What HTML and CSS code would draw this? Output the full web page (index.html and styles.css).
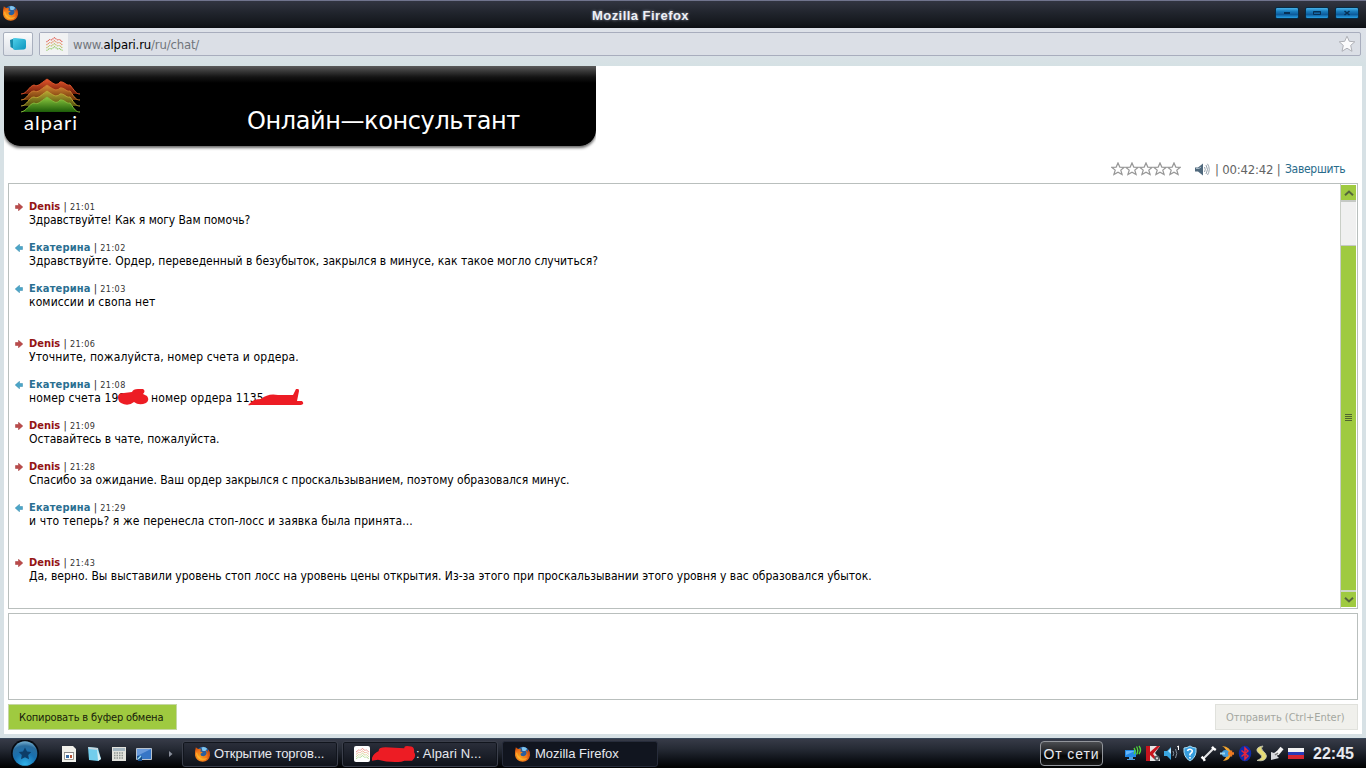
FILE: index.html
```html
<!DOCTYPE html>
<html lang="ru">
<head>
<meta charset="utf-8">
<title>Mozilla Firefox</title>
<link rel="stylesheet" href="styles.css">
</head>
<body>
<svg class="defs" width="0" height="0" aria-hidden="true">
  <defs>
    <linearGradient id="hill1" x1="0" y1="0" x2="0" y2="1"><stop offset="0" stop-color="#e8562c"/><stop offset="1" stop-color="#6b1c08"/></linearGradient>
    <linearGradient id="hill2" x1="0" y1="0" x2="0" y2="1"><stop offset="0" stop-color="#d88a36"/><stop offset="1" stop-color="#6e3408"/></linearGradient>
    <linearGradient id="hill3" x1="0" y1="0" x2="0" y2="1"><stop offset="0" stop-color="#b8a834"/><stop offset="1" stop-color="#54500c"/></linearGradient>
    <linearGradient id="hill4" x1="0" y1="0" x2="0" y2="1"><stop offset="0" stop-color="#8cc840"/><stop offset="1" stop-color="#1c5c08"/></linearGradient>
    <radialGradient id="fox" cx=".35" cy=".65" r=".75"><stop offset="0" stop-color="#f9a11d"/><stop offset=".55" stop-color="#f07418"/><stop offset="1" stop-color="#b83a08"/></radialGradient>
    <radialGradient id="orb" cx=".5" cy=".95" r=".95"><stop offset="0" stop-color="#2fb4ec"/><stop offset=".5" stop-color="#1870b0"/><stop offset=".8" stop-color="#2a6c9c"/><stop offset="1" stop-color="#79b4d4"/></radialGradient>
    <linearGradient id="cyan" x1="0" y1="0" x2="1" y2="1"><stop offset="0" stop-color="#4fd0ea"/><stop offset="1" stop-color="#0b94bd"/></linearGradient>
  </defs>
  <symbol id="firefox" viewBox="0 0 16 16">
    <circle cx="8.5" cy="7.4" r="6.6" fill="#2b5f9e"/>
    <path d="M7 1.6Q10 0 12.6 2.7L11 5 8 5z" fill="#7fc4ee"/>
    <path d="M1.3 1.2 3.6 3.1Q5 2.7 6.6 3.2L5.7 5.4 8.3 6.3 6 7.7Q6 10.3 9 10.2 12.2 10 12 6.3L11 3.9Q13 4.6 13.3 6.4L13.6 3.2Q16.2 6 15.6 9.2 14.4 15.6 8.2 15.8 1.8 15.6.5 9.5.1 5.5 1.3 1.2Z" fill="url(#fox)"/>
    <path d="M1.4 7Q1.8 12 6 14 10.5 15.3 13.5 11.5 9.8 13.6 6 11.7 2.8 9.6 2.6 6.2Z" fill="#ffc43a" opacity=".6"/>
  </symbol>
  <symbol id="waves" viewBox="0 0 16 14">
    <g fill="none" stroke-width="1.1" stroke-dasharray="1.2 .6">
      <path d="M0 5 3 2.5 5 3 8 .7 11 3 13 2.5 16 5" stroke="#e0584c"/>
      <path d="M0 8 3 5.5 5 6 8 3.7 11 6 13 5.5 16 8" stroke="#e48a5c"/>
      <path d="M0 11 3 8.5 5 9 8 6.7 11 9 13 8.5 16 11" stroke="#b9b95a"/>
      <path d="M0 13.5 3 11.5 5 12 8 9.7 11 12 13 11.5 16 13.5" stroke="#8cc75c"/>
    </g>
  </symbol>
  <symbol id="star" viewBox="0 0 14 14"><path d="M7 .9 8.8 5.1 13.2 5.3 9.8 8.1 11.1 12.6 7 10.3 2.9 12.6 4.2 8.1.8 5.3 5.2 5.1Z" fill="#fff" stroke="#979797" stroke-width="1.2"/></symbol>
  <symbol id="arrow-in" viewBox="0 0 8 8"><path d="M.5 2.5H3.5V.3L7.8 4 3.5 7.8V5.5H.5Z" fill="#bb4a4a" stroke="#a03636" stroke-width=".5"/></symbol>
  <symbol id="arrow-out" viewBox="0 0 8 8"><path d="M7.5 2.5H4.5V.3L.2 4 4.5 7.8V5.5H7.5Z" fill="#4ba5c8" stroke="#358bad" stroke-width=".5"/></symbol>
</svg>

<header class="titlebar">
  <svg class="titlebar-icon" width="17" height="16"><use href="#firefox"/></svg>
  <h1 class="titlebar-text">Mozilla Firefox</h1>
  <div class="window-buttons">
    <span class="window-button"><svg width="22" height="10"><path d="M8 5H14" stroke="#063055" stroke-width="2"/></svg></span>
    <span class="window-button"><svg width="22" height="10"><path d="M7.5 3.5H14.5V6.5H7.5ZM7.5 4H14.5" fill="none" stroke="#063055"/></svg></span>
    <span class="window-button"><svg width="22" height="10"><path d="M8.5 3 13.5 7M13.5 3 8.5 7" stroke="#063055" stroke-width="1.6"/></svg></span>
  </div>
</header>

<nav class="navbar">
  <span class="tab-button"><svg width="18" height="14" viewBox="0 0 18 14"><path d="M1 3 5 1.5V12L1.5 10Z" fill="#168bac"/><path d="M4 2Q4 1 6 1L15 2Q17 2 17 4V10Q17 12 15 12.5L6 13Q4 13 4 11Z" fill="url(#cyan)"/></svg></span>
  <div class="address">
    <span class="site-icon"><svg width="17" height="14"><use href="#waves"/></svg></span>
    <span class="url">www.<b>alpari.ru</b>/ru/chat/</span>
    <svg class="bookmark" width="18" height="18" viewBox="0 0 18 18"><path d="M9 1.2 11.3 6.3 16.8 6.8 12.7 10.4 14 16.3 9 13.2 4 16.3 5.3 10.4 1.2 6.8 6.7 6.3Z" fill="#fbfbfc" stroke="#aeb0b6"/></svg>
  </div>
</nav>

<main class="page">
  <div class="banner">
    <div class="logo">
      <svg width="60" height="35" viewBox="0 0 60 35">
        <path d="M0 16C6 16 8 8 13 7 17 9 19 6 26 1 32 5 35 9 39 4 43 3 45 8 49 7 54 13 55 16 59 16Z" fill="url(#hill1)"/>
        <path d="M0 22C6 22 8 13 13 13 17 15 19 12 26 7 32 11 35 14 39 10 43 9 45 14 49 13 54 20 55 22 59 22Z" fill="url(#hill2)"/>
        <path d="M0 28C6 28 8 19 13 19 17 21 19 18 26 13 32 17 35 20 39 16 43 15 45 20 49 19 54 26 55 28 59 28Z" fill="url(#hill3)"/>
        <path d="M0 34C6 33 8 26 13 25 17 27 19 24 26 19 32 23 35 27 39 22 43 21 45 26 49 25 54 32 55 34 59 34Z" fill="url(#hill4)"/>
        <path d="M0 16C6 16 8 8 13 7 17 9 19 6 26 1 32 5 35 9 39 4 43 3 45 8 49 7 54 13 55 16 59 16" fill="none" stroke="#d9532c"/>
        <path d="M0 22C6 22 8 13 13 13 17 15 19 12 26 7 32 11 35 14 39 10 43 9 45 14 49 13 54 20 55 22 59 22" fill="none" stroke="#cc7c30"/>
        <path d="M0 28C6 28 8 19 13 19 17 21 19 18 26 13 32 17 35 20 39 16 43 15 45 20 49 19 54 26 55 28 59 28" fill="none" stroke="#bba735"/>
        <path d="M0 34C6 33 8 26 13 25 17 27 19 24 26 19 32 23 35 27 39 22 43 21 45 26 49 25 54 32 55 34 59 34" fill="none" stroke="#84b83a"/>
      </svg>
      <span class="logo-text">alpari</span>
    </div>
    <h2 class="banner-title">Онлайн—консультант</h2>
  </div>

  <div class="toolbar">
    <span class="rating"><svg width="14" height="14"><use href="#star"/></svg><svg width="14" height="14"><use href="#star"/></svg><svg width="14" height="14"><use href="#star"/></svg><svg width="14" height="14"><use href="#star"/></svg><svg width="14" height="14"><use href="#star"/></svg></span>
    <svg class="sound" width="15" height="13" viewBox="0 0 15 13"><path d="M0 4.5H3L8 .5V12.5L3 8.5H0Z" fill="#50697d"/><path d="M1 5.5H4L6 4" stroke="#a5b8c5" fill="none"/><path d="M9.5 4Q11 6.5 9.5 9M11 2Q14 6.5 11 11M12.5.8Q16 6.5 12.5 12" fill="none" stroke="#8a97a3" stroke-width=".9"/></svg>
    <span class="timer">| 00:42:42 |</span>
    <a class="finish">Завершить</a>
  </div>

  <section class="chat">
    <div class="messages">
      <article class="message in"><svg width="8" height="8"><use href="#arrow-in"/></svg><div><p class="meta"><b>Denis</b> | <time>21:01</time></p><p class="text tight">Здравствуйте! Как я могу Вам помочь?</p></div></article>
      <article class="message out"><svg width="8" height="8"><use href="#arrow-out"/></svg><div><p class="meta"><b>Екатерина</b> | <time>21:02</time></p><p class="text even">Здравствуйте. Ордер, переведенный в безубыток, закрылся в минусе, как такое могло случиться?</p></div></article>
      <article class="message out spaced"><svg width="8" height="8"><use href="#arrow-out"/></svg><div><p class="meta"><b>Екатерина</b> | <time>21:03</time></p><p class="text loose">комиссии и свопа нет</p></div></article>
      <article class="message in"><svg width="8" height="8"><use href="#arrow-in"/></svg><div><p class="meta"><b>Denis</b> | <time>21:06</time></p><p class="text loose">Уточните, пожалуйста, номер счета и ордера.</p></div></article>
      <article class="message out"><svg width="8" height="8"><use href="#arrow-out"/></svg><div><p class="meta"><b>Екатерина</b> | <time>21:08</time></p><p class="text loose numbers"><span class="account">номер счета 199</span><span class="order">номер ордера 1135</span>
        <svg class="scribble" width="280" height="22" viewBox="0 0 280 22"><g fill="#ed1c24"><path d="M89 8Q89 4 95 4L103 3Q104 0 109 0L114 0Q117 2 114 5L118 7Q121 11 117 14 110 17 105 13 99 18 92 14Q89 12 89 8Z"/><path d="M220 15Q224 10 232 10 239 4 249 6L264 6 267 0Q270-1 270 2L268 12 273 12Q276 15 272 16L222 16Q218 17 220 15Z"/></g></svg></p></div></article>
      <article class="message in"><svg width="8" height="8"><use href="#arrow-in"/></svg><div><p class="meta"><b>Denis</b> | <time>21:09</time></p><p class="text">Оставайтесь в чате, пожалуйста.</p></div></article>
      <article class="message in"><svg width="8" height="8"><use href="#arrow-in"/></svg><div><p class="meta"><b>Denis</b> | <time>21:28</time></p><p class="text">Спасибо за ожидание. Ваш ордер закрылся с проскальзыванием, поэтому образовался минус.</p></div></article>
      <article class="message out spaced"><svg width="8" height="8"><use href="#arrow-out"/></svg><div><p class="meta"><b>Екатерина</b> | <time>21:29</time></p><p class="text loose">и что теперь? я же перенесла стоп-лосс и заявка была принята...</p></div></article>
      <article class="message in"><svg width="8" height="8"><use href="#arrow-in"/></svg><div><p class="meta"><b>Denis</b> | <time>21:43</time></p><p class="text even">Да, верно. Вы выставили уровень стоп лосс на уровень цены открытия. Из-за этого при проскальзывании этого уровня у вас образовался убыток.</p></div></article>
    </div>
    <div class="scrollbar">
      <span class="scroll-end"><svg width="10" height="6"><path d="M1 5.2 5 1.5 9 5.2" fill="none" stroke="#55663c" stroke-width="2"/></svg></span>
      <span class="scroll-track"></span>
      <span class="scroll-thumb"><svg width="7" height="8"><path d="M0 .5H7M0 2.5H7M0 4.5H7M0 6.5H7" stroke="#50642f"/></svg></span>
      <span class="scroll-end"><svg width="10" height="6"><path d="M1 .8 5 4.5 9 .8" fill="none" stroke="#55663c" stroke-width="2"/></svg></span>
    </div>
  </section>

  <div class="reply"></div>
  <div class="actions">
    <span class="button copy"><span>Копировать в буфер обмена</span></span>
    <span class="button send"><span>Отправить (Ctrl+Enter)</span></span>
  </div>
</main>

<footer class="taskbar">
  <svg class="start" width="30" height="28" viewBox="0 0 30 28"><circle cx="15" cy="13.5" r="14" fill="#070a10"/><circle cx="15" cy="13.5" r="12.3" fill="url(#orb)"/><path d="M15 7.5 17 11.5 21.3 12 18.2 15 19 19.3 15 17.3 11 19.3 11.8 15 8.7 12 13 11.5Z" fill="#0d3d68"/></svg>
  <div class="quick">
    <svg width="16" height="16" viewBox="0 0 16 16"><path d="M1 0H12L15 3V16H1Z" fill="#f0f0ea"/><path d="M3.5 6.5H12.5V13.5H3.5Z" fill="#fff" stroke="#9b9b92"/><path d="M3 6.5H13" stroke="#888"/><path d="M5 9H8V12H5Z" fill="#386da5"/><path d="M9 9H11V12H9Z" fill="#b65435"/></svg>
    <svg width="16" height="16" viewBox="0 0 16 16"><path d="M2 1 12 2 15 13 12 15 3 14Z" fill="#72cdec"/><path d="M11 2 15 13 12 15Z" fill="#d9edf2"/><path d="M2 1 12 2V4L3 3Z" fill="#c5d7df"/></svg>
    <svg width="16" height="16" viewBox="0 0 16 16"><path d="M1 1H15V15H1Z" fill="#e2e2dc"/><path d="M2 2H14V5H2Z" fill="#a5b6c0"/><path d="M3 7H13M3 9.5H13M3 12H13" stroke="#8e9490" stroke-width="1.3" stroke-dasharray="1.5 1"/></svg>
    <svg width="16" height="16" viewBox="0 0 16 16"><path d="M.5 2.5H15.5V13.5H.5Z" fill="#3776c6" stroke="#b8c2cd"/><path d="M1 3H15L1 10Z" fill="#6a9bdc"/><path d="M1 10H6V15H2Z" fill="#18508e"/><path d="M2 13 5 10" stroke="#9fe0f8" stroke-width="1.5"/></svg>
  </div>
  <svg class="more" width="4" height="6"><path d="M0 0 3.5 3 0 6Z" fill="#8a8f9b"/></svg>
  <div class="tasks">
    <span class="task"><svg width="17" height="16"><use href="#firefox"/></svg><span class="task-name t1">Открытие торгов...</span></span>
    <span class="task second"><span class="task-site"><svg width="13" height="11"><use href="#waves"/></svg></span><svg class="blot" width="45" height="18" viewBox="0 0 46 18"><path d="M1 13Q3 8 8 6 7 2 15 2L34 3Q34 0 39 1 45 1 44 7 47 12 42 16L34 16 31 17Q18 18 7 15L1 16Z" fill="#ed1c24"/></svg><span class="task-name t2">: Alpari N...</span></span>
    <span class="task active"><svg width="17" height="16"><use href="#firefox"/></svg><span class="task-name t3">Mozilla Firefox</span></span>
  </div>
  <span class="power">От сети</span>
  <div class="tray">
    <svg width="17" height="17" viewBox="0 0 17 17"><path d="M0 5H11V12H0Z" fill="#238be8"/><path d="M1 6H10L1 10Z" fill="#68b7fa"/><path d="M4 12H8V14H10V15H2V14H4Z" fill="#4f9ddb"/><path d="M9 3Q11 6 9 9M11.5 1.5Q14 5.5 11.5 9.5M14 1Q17 5 14 9" fill="none" stroke="#50d33a" stroke-width="1.4"/></svg>
    <svg width="16" height="17" viewBox="0 0 16 17"><path d="M1 1H15L10 8 15 14V16H1Z" fill="#e5e5e5"/><path d="M1 1H5V7L12 1H15L8 9 12 14H9L5 10V16H1Z" fill="#c7141d"/><circle cx="12" cy="13.3" r="2.7" fill="#555b60"/><circle cx="12" cy="13.3" r="1.1" fill="#ddd"/></svg>
    <svg width="17" height="17" viewBox="0 0 17 17"><path d="M1 6H4L8 2V15L4 11H1Z" fill="#3aa5df"/><path d="M5 6 8 3V9Z" fill="#b8e7ff"/><path d="M10 6Q11.5 8.5 10 11M12.5 4Q15 8.5 12.5 13" fill="none" stroke="#82909d"/><path d="M14 2 15.5 1V5" fill="none" stroke="#fff"/></svg>
    <svg width="14" height="17" viewBox="0 0 14 17"><path d="M7 1Q10 3 13 3 14 12 7 16 0 12 1 3 4 3 7 1Z" fill="#359dde" stroke="#a9ddf5"/><path d="M4.5 6Q5 4 7.2 4.2 10.3 5 8.8 7.4L7 9V10.5M7 12V13.5" fill="none" stroke="#fff" stroke-width="1.6"/></svg>
    <svg width="17" height="17" viewBox="0 0 17 17"><path d="M3.5 13.5 13.5 3.5" stroke="#e2e3e5" stroke-width="2.2"/><path d="M1.5 11.8 3.5 13.5 4.8 15.8M12 1.8 13.5 3.5 15.8 5" fill="none" stroke="#fff" stroke-width="2.5"/></svg>
    <svg width="16" height="17" viewBox="0 0 16 17"><path d="M3 1Q12 2 12 8.5 12 15 4 16 8 12 8 8.5 8 4 3 1Z" fill="#f4a52e"/><circle cx="6.5" cy="8.5" r="3.6" fill="#439cda"/><path d="M9 8.5H15M12 5.5V11.5" stroke="#ed7a21" stroke-width="2.4"/><path d="M1 8.5H6" stroke="#9dd5ed" stroke-width="2"/></svg>
    <svg width="14" height="17" viewBox="0 0 14 17"><ellipse cx="7" cy="8.5" rx="6.2" ry="7.8" fill="#102cab"/><path d="M3.5 5.5 10 11 7 14V3L10 6 3.5 11.5" fill="none" stroke="#ea263b" stroke-width="1.5"/></svg>
    <svg width="13" height="17" viewBox="0 0 13 17"><path d="M8 1Q1 2 2 6 3 8 6 10 8 12 5 14L2 15.5Q11 17 11.5 11 11 8 8 6 5 3 8 1Z" fill="#e6dc75" stroke="#c5c8b5" stroke-width=".8"/></svg>
    <svg width="15" height="17" viewBox="0 0 15 17"><path d="M1 7 4 8 7 6 9 8 7 11 9 13 1 15Z" fill="#d6d8dc"/><path d="M7 9 12 3" stroke="#f2f2f2" stroke-width="4"/><path d="M5 10 8 8" stroke="#777" stroke-width="1.5"/></svg>
    <span class="flag"></span>
  </div>
  <span class="clock">22:45</span>
</footer>
</body>
</html>
```

FILE: styles.css
```css
* { box-sizing: border-box; }
body, h1, h2, p { margin: 0; }
body {
  width: 1366px; height: 768px; overflow: hidden;
  display: flex; flex-direction: column;
  background: #d7e1e5;
  font-family: "DejaVu Sans Condensed", "DejaVu Sans", sans-serif;
  font-stretch: condensed;
  white-space: nowrap;
}
svg { display: block; flex: none; }
.defs { position: absolute; }

.titlebar {
  height: 28px; flex: none; display: flex; padding: 0 7px 0 2px;
  border-top: 1px solid #70748d;
  background: linear-gradient(#323541, #20242c 45%, #14171c 85%, #0c0e13);
}
.titlebar-icon { margin-top: 4px; }
.titlebar-text {
  flex: 1; margin: 6px 0 0 573px; color: #eef0f6;
  font: 700 13px/18px "Liberation Sans", sans-serif; letter-spacing: .45px;
  text-shadow: 0 0 3px #9296a8;
}
.window-buttons { display: flex; gap: 6px; padding-top: 6px; }
.window-button {
  width: 24px; height: 12px; border: 1px solid #082b43; border-radius: 2px;
  background: linear-gradient(#46b0e8, #197bbb 35%, #0d5b9b 65%, #27a0e5);
}

.navbar {
  height: 38px; flex: none; display: flex; gap: 6px; padding: 4px 5px 10px 3px;
  background: linear-gradient(#dde1e8, #dbe1e7 60%, #d5e1e4);
}
.tab-button {
  width: 30px; height: 24px; display: grid; place-items: center;
  border: 1px solid #a9b0be; border-radius: 2px; background: linear-gradient(#fafbfc, #dce0e7);
}
.address {
  flex: 1; height: 24px; display: flex; align-items: center; padding-right: 4px;
  border: 1px solid #a8adbd; border-radius: 2px; background: #dbdfe6;
}
.site-icon { width: 28px; height: 22px; display: grid; place-items: center; background: #f1f2f3; }
.url { flex: 1; padding-left: 5px; font-size: 13px; color: #71757b; letter-spacing: -.17px; }
.url b { font-weight: 400; color: #000; }

.page {
  width: 1358px; height: 668px; flex: none; margin-left: 4px; background: #fff;
  display: flex; flex-direction: column;
}
.banner {
  width: 592px; height: 80px; flex: none; display: flex;
  border-radius: 0 0 16px 16px;
  background: linear-gradient(#5b5b5b, #393939 5px, #141414 11px, #000 17px);
  box-shadow: 0 2px 3px rgba(0, 0, 0, .6);
  clip-path: inset(0 0 -8px 0);
}
.logo { width: 60px; margin: 12px 0 0 17px; color: #fff; }
.logo-text { display: block; margin-left: 3px; font: 400 20px/19px Lato, sans-serif; letter-spacing: 1.05px; }
.banner-title { margin: 39px 0 0 166px; color: #fff; font: 400 24px/32px "DejaVu Sans", sans-serif; font-stretch: normal; letter-spacing: -.4px; }

.toolbar { height: 37px; flex: none; display: flex; justify-content: flex-end; align-items: flex-end; padding: 0 18px 5px 0; color: #646464; font-size: 13px; line-height: 17px; }
.rating { display: flex; margin: 0 14px 2px 0; }
.sound { margin: 0 5px 2px 0; }
.timer { width: 70px; letter-spacing: -.2px; }
.finish { width: 59px; color: #286b8b; font-size: 12px; letter-spacing: -.3px; }

.chat { height: 426px; flex: none; margin: 0 4px; border: 1px solid #b9bfbd; display: flex; }
.messages { flex: 1; padding: 16px 0 0 6px; }
.message { height: 41px; display: flex; gap: 6px; }
.message > svg { margin-top: 3px; }
.spaced { height: 55px; }
.meta { height: 13px; font-size: 11px; line-height: 13px; color: #333; }
.meta b { font-size: 11px; }
.in b { color: #941414; }
.out b { color: #2a6f91; letter-spacing: .16px; }
.meta time { font-size: 9px; letter-spacing: .45px; }
.text { height: 14px; font-size: 12px; line-height: 14px; color: #000; letter-spacing: -.02px; }
.tight { letter-spacing: -.07px; }
.even { letter-spacing: .01px; }
.loose { letter-spacing: .12px; }
.numbers { position: relative; display: flex; }
.account { width: 122px; }
.scribble { position: absolute; left: 0; top: -2px; }

.scrollbar { width: 17px; display: flex; flex-direction: column; padding: 1px 1px 1px 0; border-left: 1px solid #c9cec6; }
.scroll-end { height: 15px; display: grid; place-items: center; background: #9fca40; }
.scroll-track { height: 46px; border: solid #c5c9c4; border-width: 2px 0 1px; background: #f0f0f0; }
.scroll-thumb { flex: 1; display: grid; place-items: center; background: #9fca40; border-bottom: 2px solid #cdd6c5; }

.reply { height: 87px; flex: none; margin: 4px 4px; border: 1px solid #b9bfbd; }
.actions { display: flex; justify-content: space-between; padding: 0 4px; }
.button { height: 26px; padding-left: 10px; font-size: 11px; line-height: 25px; border: 1px solid #c5d7a3; }
.copy { width: 169px; background: #9fca40; color: #17200b; letter-spacing: -.15px; }
.send { width: 143px; background: #f0f0ec; border-color: #e0e1dc; color: #a4a7a0; letter-spacing: -.05px; }

.taskbar {
  height: 30px; flex: none; margin-top: 4px; display: flex; align-items: center; padding: 0 9px 0 10px;
  border-top: 1px solid #39485a;
  background: linear-gradient(#373b48, #252a34 35%, #0c0f15 75%, #000);
  font-family: "Liberation Sans", sans-serif; color: #e7e9ef;
}
.quick { display: flex; gap: 9px; margin-left: 21px; }
.more { margin-left: 17px; }
.tasks { display: flex; gap: 4px; margin-left: 9px; }
.task {
  width: 156px; height: 26px; display: flex; align-items: center; padding-left: 11px;
  border: 1px solid #3b3f4b; border-radius: 3px; background: linear-gradient(#2b2f3b, #1d212b 50%, #10131a);
  box-shadow: inset 0 0 0 1px #11151d;
}
.active { background: #11151f; border-color: #272c3b; }
.task-name { padding-left: 3px; font-size: 13px; line-height: 20px; }
.t1 { letter-spacing: -.1px; }
.t3 { padding-left: 4px; }
.task-site { width: 16px; height: 16px; display: grid; place-items: center; background: #fff; border-radius: 2px; }
.blot { margin-left: 1px; }
.t2 { padding-left: 0; letter-spacing: .15px; }
.power {
  width: 63px; height: 25px; margin-left: auto; border: 1px solid #92959b; border-radius: 4px;
  background: linear-gradient(#4b4d51, #202124 45%, #050505 60%, #181818);
  text-align: center; font: 14px/25px "Liberation Sans", sans-serif; letter-spacing: .9px;
}
.tray { width: 179px; margin-left: 22px; display: flex; justify-content: space-between; align-items: center; }
.flag { width: 16px; height: 11px; background: linear-gradient(#f2f2f2 0 33%, #293bb8 33% 67%, #d62630 67%); }
.clock { width: 44px; margin-left: 9px; font: 700 16px/20px "Liberation Sans", sans-serif; }
```
